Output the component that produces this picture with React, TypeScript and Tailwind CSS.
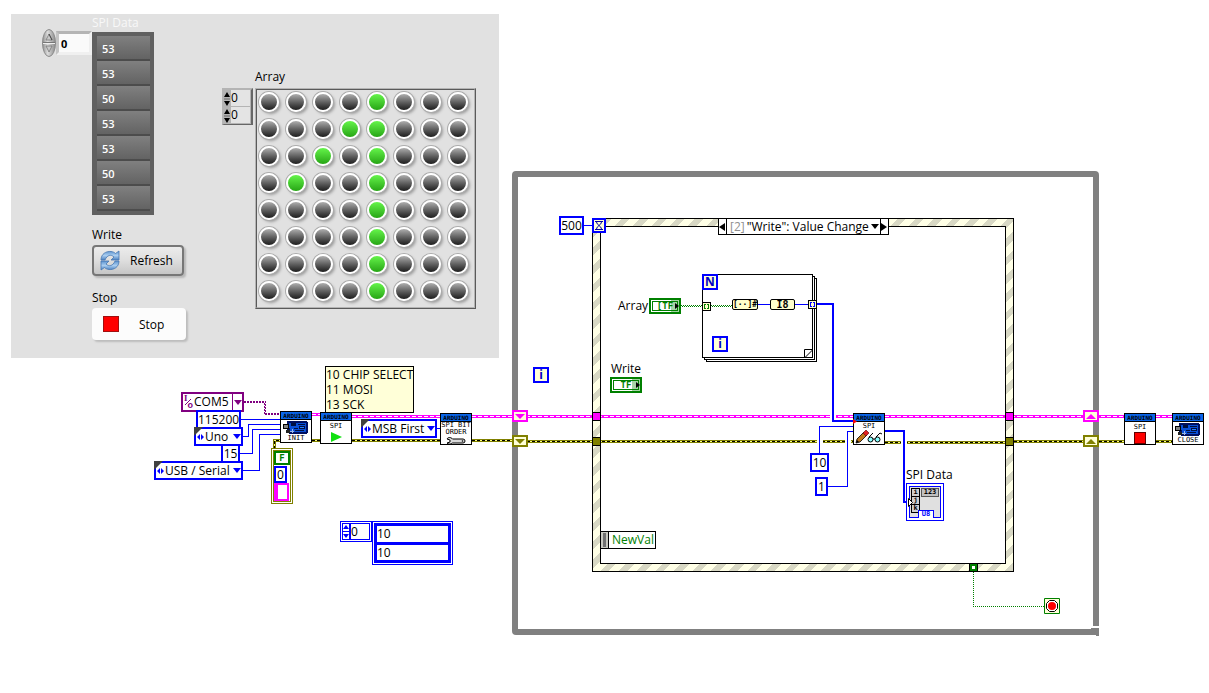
import type { ReactNode } from "react";

const spiData = [53, 53, 50, 53, 53, 50, 53];

const ledRows = [
  "00001000",
  "00011000",
  "00101000",
  "01001000",
  "00001000",
  "00001000",
  "00001000",
  "00001000",
];

/* ---------- Front panel ---------- */

const IndexKnob = () => (
  <svg width="14" height="28" viewBox="0 0 14 28" aria-hidden="true">
    <defs>
      <linearGradient id="knob" x1="0" x2="1" y1="0" y2="0">
        <stop offset="0" stopColor="#8f8f8f" />
        <stop offset="0.4" stopColor="#dcdcdc" />
        <stop offset="1" stopColor="#8a8a8a" />
      </linearGradient>
    </defs>
    <ellipse cx="7" cy="14" rx="6.5" ry="13.5" fill="url(#knob)" stroke="#8a8a8a" />
    <path d="M1 13.5h12" stroke="#777" />
    <path d="M1 14.5h12" stroke="#eee" />
    <path d="M7 5l3 6H4z" fill="#c8c8c8" stroke="#777" strokeWidth="0.8" />
    <path d="M7 5l3 6" stroke="#333" strokeWidth="0.8" />
    <path d="M7 23l3-6H4z" fill="#c8c8c8" stroke="#777" strokeWidth="0.8" />
  </svg>
);

const RefreshIcon = () => (
  <svg width="20" height="22" viewBox="0 0 20 22" aria-hidden="true">
    <defs>
      <linearGradient id="refresh" x1="0" x2="0" y1="0" y2="1">
        <stop offset="0" stopColor="#5d93cf" />
        <stop offset="0.5" stopColor="#a9cdf0" />
        <stop offset="1" stopColor="#4a7fbe" />
      </linearGradient>
    </defs>
    <path
      d="M1 10C1 4 6 1 11 1.500c2 .2 3.500 1 4.500 2L19 1v9h-8l3-3c-3-3-7-2-9 3z"
      fill="url(#refresh)"
      stroke="#4677b3"
      strokeWidth="0.8"
    />
    <path
      d="M19 11c0 6-5 9-10 8.500-2-.2-3.500-1-4.500-2L1 20v-9h8l-3 3c3 3 7 2 9-3z"
      fill="url(#refresh)"
      stroke="#4677b3"
      strokeWidth="0.8"
    />
  </svg>
);

const IndexRow = ({ label }: { label: string }) => (
  <div className="flex h-[17px] gap-px">
    <button aria-label={`Step ${label}`} className="w-[6px] bg-[#b4b4b4]">
      <svg width="6" height="16" viewBox="0 0 6 16" aria-hidden="true">
        <path d="M3 1l3 5H0zM3 15l3-5H0z" fill="#000" />
        <path d="M0 8h6" stroke="#666" />
      </svg>
    </button>
    <input
      aria-label={label}
      defaultValue="0"
      className="h-[16px] w-[19px] bg-[#e4e4e4] p-0 text-[12px] leading-[16px] outline-none"
    />
  </div>
);

const FrontPanel = () => (
  <section
    aria-label="Front panel"
    className="ml-[11px] flex w-[488px] items-start bg-[#e1e1e1] pb-[18px] pl-[31px]"
  >
    <div className="mt-[15px] flex items-center">
      <IndexKnob />
      <input
        aria-label="SPI Data index"
        defaultValue="0"
        className="h-6 w-[36px] border-[3px] border-t-[#b4b4b4] border-r-[#f0f0f0] border-b-[#f0f0f0] border-l-[#c4c4c4] bg-[#fafafa] pl-0.5 text-[11px] font-bold outline-none"
      />
    </div>

    <div className="flex w-[96px] flex-col items-start">
      <h2 className="leading-[18px] text-[#f8f8f8]">SPI Data</h2>
      <ol className="w-[62px] bg-[#606060] py-1 pr-1 pl-[5px]">
        {spiData.map((value, i) => (
          <li
            key={i}
            className="h-[25px] border-b-2 border-b-[#4c4c4c] bg-linear-to-b from-[#808080] to-[#636363] pl-[5px] text-[11px] leading-[26px] font-semibold text-white"
          >
            {value}
          </li>
        ))}
      </ol>
      <label htmlFor="write" className="mt-[11px] leading-[18px]">
        Write
      </label>
      <button
        id="write"
        className="mt-px flex h-[31px] w-[92px] items-center rounded-[4px] border-2 border-[#777] bg-linear-to-b from-[#ececec] via-[#dedede] to-[#c6c6c6] pl-[6px] shadow-[2px_2px_2px_#b8b8b8]"
      >
        <RefreshIcon />
        <span className="ml-[10px] pt-px">Refresh</span>
      </button>
      <label htmlFor="stop" className="mt-[13px] leading-[18px]">
        Stop
      </label>
      <button
        id="stop"
        className="mt-px flex h-8 w-[94px] items-center rounded-[4px] bg-[#fcfcfc] pl-[11px] shadow-[2px_2px_2px_#bcbcbc]"
      >
        <span className="size-4 border border-[#a01010] bg-[#ff0000]" />
        <span className="ml-[20px] pt-px">Stop</span>
      </button>
    </div>

    <div className="mt-[74px] ml-[34px] w-[31px] border-2 border-b border-t-[#b4b4b4] border-r-[#666] border-b-[#666] border-l-[#b4b4b4] bg-[#b4b4b4]">
      <IndexRow label="Row index" />
      <IndexRow label="Column index" />
    </div>

    <div className="mt-[54px] ml-0.5 flex flex-col items-start gap-0.5">
      <h2 className="leading-[18px]">Array</h2>
      <div className="border border-t-[#b4b4b4] border-r-[#5a5a5a] border-b-[#5a5a5a] border-l-[#b4b4b4]">
        <div className="grid grid-cols-8 gap-[7px] border border-t-[#5a5a5a] border-r-[#b4b4b4] border-b-[#b4b4b4] border-l-[#5a5a5a] pt-0.5 pr-[6px] pb-[6px] pl-0.5">
          {ledRows.flatMap((row, r) =>
            [...row].map((bit, c) => (
              <input
                key={`${r}-${c}`}
                type="checkbox"
                defaultChecked={bit === "1"}
                aria-label={`Row ${r} column ${c}`}
                className="size-5 appearance-none rounded-full border-2 border-white bg-linear-to-b from-[#c4c4c4] to-[#101010] bg-origin-border shadow-[0_0_0_1px_#acacac,2px_2px_3px_#999] checked:from-[#6cff50] checked:to-[#1c9c08]"
              />
            )),
          )}
        </div>
      </div>
    </div>
  </section>
);

/* ---------- Block diagram ---------- */

const PinkWire = ({ d }: { d: string }) => (
  <>
    <path d={d} stroke="#ff00ff" strokeWidth="3" />
    <path d={d} stroke="#fff" strokeDasharray="4 2" />
  </>
);

const ErrorWire = ({ d }: { d: string }) => (
  <>
    <path d={d} stroke="#808000" strokeWidth="3" />
    <path d={d} stroke="#ffff80" />
    <path d={d} stroke="#000" strokeDasharray="3 2" />
  </>
);

const Wires = () => (
  <svg className="absolute inset-0 h-full w-full" fill="none" shapeRendering="crispEdges" aria-hidden="true">
    <PinkWire d="M312 414.500H320" />
    <PinkWire d="M352 416.500H440M472 416.500H853M885 416.500H1124M1156 416.500H1172" />
    <ErrorWire d="M274.500 449V440.500H280M312 440.500H320M352 440.500H440M472 440.500H512" />
    <ErrorWire d="M512 441.500H853M885 442.500H1005M1014 441.500H1124M1156 441.500H1172" />

    <path
      d="M244 401.500H265.500V413.500H280M244 402.500H264.500V414.500H280"
      stroke="#800080"
      strokeDasharray="2 1"
    />
    <path
      d="M240 419.500H280M243 436.500H248.500V424.500H280M240 453.500H252.500V429.500H280M243 470.500H259.500V434.500H280M437 428.500H440M584 225.500H592"
      stroke="#0000ff"
    />
    <path d="M758 304.500H770M795 304.500H808" stroke="#0000ff" />
    <path d="M681 305.500H702M711 305.500H732" stroke="#008000" strokeDasharray="1 1" />
    <path d="M682 306.500H702M712 306.500H732" stroke="#008000" strokeDasharray="1 1" />

    <path d="M833 410V420M819.500 436V448M847.500 436V448M904 436V448" stroke="#fff" strokeWidth="6" />
    <path d="M817 304H833V421H853M885 431H904V502H907" stroke="#0000ff" strokeWidth="2" />
    <path d="M819.500 453V426.500H853M828 486.500H847.500V431.500H853" stroke="#0000ff" />
    <path d="M973.500 572V606.500H1044" stroke="#008000" strokeDasharray="1 1" />
  </svg>
);

const Caret = ({ className = "" }: { className?: string }) => (
  <svg width="8" height="5" viewBox="0 0 8 5" className={className} aria-hidden="true">
    <path d="M0 0h8L4 5z" fill="currentColor" />
  </svg>
);

const NumberConst = ({ label, value, className }: { label: string; value: string; className: string }) => (
  <input
    aria-label={label}
    defaultValue={value}
    className={`absolute h-[19px] border-2 border-[#0000ff] bg-white p-0 text-center text-[12px] leading-[15px] outline-none ${className}`}
  />
);

const EnumConst = ({ label, value, className }: { label: string; value: string; className: string }) => (
  <div className={`absolute flex h-[19px] items-center border-2 border-[#0000ff] bg-white pl-px ${className}`}>
    <svg width="9" height="9" viewBox="0 0 9 9" className="absolute -top-0.5 -left-0.5" aria-hidden="true">
      <path d="M0 0h9L0 9z" fill="#404040" />
    </svg>
    <svg width="7" height="6" viewBox="0 0 7 6" className="relative shrink-0" aria-hidden="true">
      <path d="M3 0v6L0 3zM4 0v6l3-3z" fill="#0000ff" />
    </svg>
    <select
      aria-label={label}
      defaultValue={value}
      className="relative ml-px h-[15px] min-w-0 flex-1 appearance-none bg-transparent text-[12px] leading-[15px] outline-none"
    >
      <option>{value}</option>
    </select>
    <Caret className="shrink-0 text-[#0000ff]" />
  </div>
);

const ArduinoNode = ({ className, children }: { className: string; children: ReactNode }) => (
  <div
    className={`absolute flex size-8 flex-col items-center overflow-hidden border border-black bg-white font-['DejaVu_Sans_Mono',monospace] text-[7px] leading-[7px] ${className}`}
  >
    <div className="h-2 w-full border-b border-black bg-[#0a66ea] text-center text-[6px] leading-[7px] font-bold text-black">
      ARDUINO
    </div>
    {children}
  </div>
);

const BoardIcon = () => (
  <svg width="26" height="13" viewBox="0 0 26 13" className="mt-px shrink-0" shapeRendering="crispEdges" aria-hidden="true">
    <path d="M4 0h20l1 2v9l-2 2H7l-3-2z" fill="#001060" />
    <path d="M6 2h17v9H7z" fill="#0a50d8" />
    <path d="M8 2h5v3H8zM16 5h6v3h-6z" fill="#001040" />
    <path d="M15 3.500h7M11 7.500h4M12 9.500h9" stroke="#001040" />
    <path d="M17 6.500h4" stroke="#2a80ff" />
    <path d="M0 3h5v4H0z" fill="#808080" stroke="#000" />
    <path d="M3 9h4v3H3z" fill="#222" />
    <path d="M9 8v4M7 10h4" stroke="#9ab8e8" />
  </svg>
);

const WrenchIcon = () => (
  <svg width="20" height="9" viewBox="0 0 20 9" className="shrink-0" aria-hidden="true">
    <path
      d="M6.500 3H17a2 2 0 0 1 0 4H6.500C5 8.500 2 8.500 1 7l3-1V4L1 3c1-2 4-2 5.500 0z"
      fill="#d8d8d8"
      stroke="#000"
    />
    <circle cx="16.500" cy="5" r="0.800" fill="#000" />
  </svg>
);

const ReadWriteIcon = () => (
  <svg width="28" height="14" viewBox="0 0 28 14" className="shrink-0" aria-hidden="true">
    <path d="M1 13l1-4 7-7 3 3-7 7z" fill="#c07818" stroke="#000" strokeWidth="0.8" />
    <path d="M8 3l3-3 3 3-3 3z" fill="#e02020" stroke="#500" strokeWidth="0.6" />
    <path d="M1 13l1-3 2 2z" fill="#000" />
    <circle cx="15.500" cy="9.500" r="2.500" fill="#8ff" stroke="#000" />
    <circle cx="22.500" cy="9.500" r="2.500" fill="#8ff" stroke="#000" />
    <path d="M14 7l4-4M21 7l4-4 2 1M18 9h2" stroke="#000" fill="none" />
  </svg>
);

const BoolTerminal = ({ text, label, className }: { text: string; label: string; className: string }) => (
  <div
    aria-label={label}
    className={`absolute flex h-4 w-8 items-center border-2 border-[#008000] bg-white p-px ${className}`}
  >
    <span className="flex h-full w-full items-center justify-center border border-[#008000] font-['DejaVu_Sans_Mono',monospace] text-[9px] leading-[9px] font-bold text-[#008000]">
      {text}
    </span>
    <span className="absolute inset-y-0 right-0 w-2 bg-[#008000]/35" />
    <svg width="4" height="6" viewBox="0 0 4 6" className="absolute right-0" aria-hidden="true">
      <path d="M0 0l4 3-4 3z" fill="#000" />
    </svg>
  </div>
);

const LoopTerminal = ({ text, className }: { text: string; className: string }) => (
  <div
    className={`absolute flex size-4 items-center justify-center border-2 border-[#0000ff] bg-[#ffffd8] text-[12px] leading-[12px] font-bold text-[#0000c0] ${className}`}
  >
    {text}
  </div>
);

const ShiftRegister = ({ down = false, className }: { down?: boolean; className: string }) => (
  <div className={`absolute flex h-3 w-4 items-center justify-center border-2 border-current bg-[#ffffd8] ${className}`}>
    <svg width="10" height="5" viewBox="0 0 10 5" aria-hidden="true">
      <path d={down ? "M0 0h10L5 5z" : "M0 5h10L5 0z"} fill="currentColor" />
    </svg>
  </div>
);

const Tunnel = ({ className }: { className: string }) => (
  <div className={`absolute size-[9px] border border-black ${className}`} />
);

const WhileLoop = () => (
  <>
    <div className="absolute top-[171px] left-[512px] h-[464px] w-[587px] rounded-[4px] border-[6px] border-[#808080]" />
    <svg width="8" height="12" viewBox="0 0 8 12" className="absolute top-[624px] left-[1091px]" shapeRendering="crispEdges" aria-hidden="true">
      <path d="M0 0h8v12H0z" fill="#fff" />
      <path d="M2 0h6v2H2zM0 4h8v7H0zM5 11h3v1H5z" fill="#808080" />
    </svg>
    <LoopTerminal text="i" className="top-[367px] left-[533px]" />
  </>
);

const EventStructure = () => (
  <>
    <div className="absolute top-[218px] left-[592px] h-[354px] w-[422px] border border-black bg-[repeating-linear-gradient(135deg,#ffffe6_0_7px,#d8d8c4_7px_13px)] p-[7px]">
      <div className="h-full border border-black bg-white" />
    </div>

    <div className="absolute top-[218px] left-[718px] flex h-[17px] w-[171px] border border-black bg-white">
      <button aria-label="Previous case" className="flex w-2 items-center border-r border-black">
        <svg width="6" height="8" viewBox="0 0 6 8" aria-hidden="true">
          <path d="M6 0v8L0 4z" />
        </svg>
      </button>
      <div className="relative flex flex-1 items-center pr-px pl-[3px]">
        <span className="text-[#909090]">[2]</span>
        <select
          aria-label="Event case"
          defaultValue="write"
          className="ml-0.5 h-[15px] min-w-0 flex-1 appearance-none bg-transparent text-[12px] leading-[15px] outline-none"
        >
          <option value="write">"Write": Value Change</option>
        </select>
        <Caret className="shrink-0" />
      </div>
      <button aria-label="Next case" className="flex w-2 items-center border-l border-black">
        <svg width="6" height="8" viewBox="0 0 6 8" aria-hidden="true">
          <path d="M0 0v8l6-4z" />
        </svg>
      </button>
    </div>

    <svg width="14" height="15" viewBox="0 0 14 15" className="absolute top-[218px] left-[592px]" aria-hidden="true">
      <path d="M1 1h12v13H1z" fill="#ffffd8" stroke="#0000ff" strokeWidth="2" />
      <path d="M3 3.500h8M3 11.500h8M4.500 4c0 3 5 4 5 7M9.500 4c0 3-5 4-5 7" stroke="#0000a0" fill="none" />
    </svg>

    <div className="absolute top-[531px] left-[600px] flex h-[18px] w-[56px] border border-black bg-white">
      <span className="w-2 border-r border-black bg-[#c8c8c0] px-0.5 py-px">
        <span className="block h-full bg-[#707070]" />
      </span>
      <span className="pl-[3px] leading-[16px] text-[#008000]">NewVal</span>
    </div>
  </>
);

const ForLoop = () => (
  <>
    <div className="absolute top-[278px] left-[706px] h-[84px] w-[111px] border border-black bg-white" />
    <div className="absolute top-[276px] left-[704px] h-[84px] w-[111px] border border-black bg-white" />
    <div className="absolute top-[274px] left-[702px] h-[84px] w-[111px] border border-black bg-white" />
    <svg width="9" height="9" viewBox="0 0 9 9" className="absolute top-[349px] left-[804px]" aria-hidden="true">
      <path d="M.5 9V.5H9L.5 9" fill="none" stroke="#000" />
    </svg>
    <LoopTerminal text="N" className="top-[274px] left-[702px]" />
    <LoopTerminal text="i" className="top-[336px] left-[712px]" />
  </>
);

const ConvertNode = ({ text, className }: { text: string; className: string }) => (
  <div
    className={`absolute flex h-[11px] items-center justify-center rounded-[2px] border border-black bg-[#ffffcc] font-['DejaVu_Sans_Mono',monospace] leading-[9px] font-bold ${className}`}
  >
    {text}
  </div>
);

const BracketTunnel = ({ className }: { className: string }) => (
  <svg width="9" height="9" viewBox="0 0 9 9" className={`absolute ${className}`} shapeRendering="crispEdges" aria-hidden="true">
    <path d="M.5.500h8v8h-8z" fill="#ffffcc" stroke="#000" />
    <path d="M4 2.500H2.500v4H4M5 2.500h1.500v4H5" fill="none" stroke="currentColor" />
  </svg>
);

const SpiIndicator = () => (
  <div className="absolute top-[483px] left-[906px] h-[38px] w-[38px] border border-[#0000ff] bg-white p-0.5 font-['DejaVu_Sans_Mono',monospace] text-[7px] leading-[7px] font-bold">
    <div className="relative h-full border border-[#0000ff] bg-[#e0e0e0] p-px">
      <div className="flex items-start gap-px">
        <div className="flex w-[9px] flex-col border border-black bg-[#d0d0d0] text-center">
          <span>i</span>
          <span className="border-y border-black">j</span>
          <span>k</span>
        </div>
        <span className="flex-1 border border-[#555] bg-[#c0c0c0] text-center">123</span>
      </div>
      <span className="absolute -bottom-px left-2 w-4 border-x border-t border-[#0000ff] bg-white text-center text-[#0000ff]">
        U8
      </span>
    </div>
    <svg width="5" height="9" viewBox="0 0 5 9" className="absolute top-[14px] left-px" aria-hidden="true">
      <path d="M.5.500L4.500 4.500.5 8.500z" fill="#fff" stroke="#000" />
    </svg>
  </div>
);

const BlockDiagram = () => (
  <section aria-label="Block diagram" className="pointer-events-none absolute inset-0 *:pointer-events-auto">
    <WhileLoop />
    <EventStructure />
    <ForLoop />
    <Wires />

    {/* Connection settings */}
    <div className="absolute top-[392px] left-[181px] flex h-5 w-[63px] items-center border-2 border-[#800080] bg-white">
      <span className="relative ml-px h-4 w-[9px] text-[9px] text-[#800080]">
        <span className="absolute top-0 left-0 font-['Liberation_Serif',serif] leading-[8px] font-bold">I</span>
        <svg width="9" height="16" viewBox="0 0 9 16" aria-hidden="true">
          <path d="M1 11l6-6" stroke="#800080" />
        </svg>
        <span className="absolute right-0 bottom-0 font-['Liberation_Sans',sans-serif] leading-[9px] font-bold">o</span>
      </span>
      <select
        aria-label="Serial port"
        className="ml-px h-4 min-w-0 flex-1 appearance-none text-[12px] leading-[16px] outline-none"
      >
        <option>COM5</option>
      </select>
      <span className="flex h-full w-[10px] items-center justify-center border-l border-[#800080]">
        <Caret className="text-[#800080]" />
      </span>
    </div>
    <NumberConst label="Baud rate" value="115200" className="top-[410px] left-[196px] w-[45px]" />
    <NumberConst label="Timeout" value="15" className="top-[444px] left-[221px] w-[19px]" />
    <EnumConst label="Board type" value="Uno" className="top-[427px] left-[194px] w-[49px]" />
    <EnumConst label="Connection type" value="USB / Serial" className="top-[461px] left-[154px] w-[89px]" />
    <EnumConst label="Bit order" value="MSB First" className="top-[419px] left-[361px] w-[76px]" />

    {/* Error cluster */}
    <div className="absolute top-[448px] left-[271px] h-[56px] w-[22px] border border-[#808000] bg-white p-px">
      <div className="h-full border border-[#808000]">
        <div className="flex h-[14px] w-4 items-center justify-center border-2 border-[#008000] font-['DejaVu_Sans_Mono',monospace] text-[9px] leading-[9px] font-bold text-[#008000]">
          F
        </div>
        <div className="mt-px h-[17px] w-[13px] border-2 border-[#0000ff] text-center leading-[13px]">0</div>
        <div className="h-[18px] w-[15px] border-2 border-l-4 border-[#ff00ff]" />
      </div>
    </div>

    <p className="absolute top-[366px] left-[325px] w-[89px] border border-black bg-[#ffffd8] leading-[15px] whitespace-pre">
      {"10 CHIP SELECT\n11 MOSI\n13 SCK"}
    </p>

    {/* Array constant */}
    <div className="absolute top-[521px] left-[340px] flex items-start">
      <div className="flex h-[21px] w-[32px] items-center border border-[#0000ff] bg-white p-px">
        <button aria-label="Step element index" className="flex h-full w-2 items-center justify-center bg-[#0000ff]">
          <svg width="6" height="15" viewBox="0 0 6 15" aria-hidden="true">
            <path d="M0 0h6v7H0zM0 8h6v7H0z" fill="#fff" />
            <path d="M3 1l3 4H0zM3 14l3-4H0z" fill="#0000ff" />
          </svg>
        </button>
        <input
          aria-label="Element index"
          defaultValue="0"
          className="h-full min-w-0 flex-1 border border-[#0000ff] p-0 text-[12px] outline-none"
        />
      </div>
      <div className="h-[44px] w-[81px] border border-[#0000ff] bg-white p-px">
        <div className="flex h-full flex-col gap-[3px] border-[3px] border-[#0000ff] bg-[#0000ff]">
          <input aria-label="Element 0" defaultValue="10" className="min-h-0 w-full flex-1 bg-white p-0 text-[12px] leading-[15px] outline-none" />
          <input aria-label="Element 1" defaultValue="10" className="min-h-0 w-full flex-1 bg-white p-0 text-[12px] leading-[15px] outline-none" />
        </div>
      </div>
    </div>

    {/* Arduino VIs */}
    <ArduinoNode className="top-[411px] left-[280px]">
      <BoardIcon />
      <span className="mt-px">INIT</span>
    </ArduinoNode>
    <ArduinoNode className="top-[412px] left-[320px]">
      <span className="mt-0.5">SPI</span>
      <svg width="11" height="10" viewBox="0 0 11 10" className="mt-0.5" aria-hidden="true">
        <path d="M0 0l11 5L0 10z" fill="#10e010" />
      </svg>
    </ArduinoNode>
    <ArduinoNode className="top-[413px] left-[440px]">
      <span>SPI BIT</span>
      <span>ORDER</span>
      <WrenchIcon />
    </ArduinoNode>
    <ArduinoNode className="top-[413px] left-[853px]">
      <span className="mt-px">SPI</span>
      <ReadWriteIcon />
    </ArduinoNode>
    <ArduinoNode className="top-[413px] left-[1124px]">
      <span className="mt-0.5">SPI</span>
      <span className="mt-px size-3 border border-[#600000] bg-[#ff0000]" />
    </ArduinoNode>
    <ArduinoNode className="top-[413px] left-[1172px]">
      <BoardIcon />
      <span className="mt-px">CLOSE</span>
    </ArduinoNode>

    {/* Loop edges */}
    <ShiftRegister down className="top-[410px] left-[512px] text-[#ff00ff]" />
    <ShiftRegister down className="top-[435px] left-[512px] text-[#808000]" />
    <ShiftRegister className="top-[410px] left-[1083px] text-[#ff00ff]" />
    <ShiftRegister className="top-[435px] left-[1083px] text-[#808000]" />
    <Tunnel className="top-[412px] left-[592px] bg-[#ff00ff]" />
    <Tunnel className="top-[437px] left-[592px] bg-[#808000]" />
    <Tunnel className="top-[412px] left-[1005px] bg-[#ff00ff]" />
    <Tunnel className="top-[437px] left-[1005px] bg-[#808000]" />
    <div className="absolute top-[563px] left-[969px] flex size-[9px] items-center justify-center border border-black bg-[#008000]">
      <span className="size-[3px] bg-white" />
    </div>

    {/* Event case contents */}
    <NumberConst label="Event timeout" value="500" className="top-[216px] left-[559px] w-[25px]" />
    <span className="absolute top-[297px] left-[618px] leading-[18px]">Array</span>
    <BoolTerminal text="[TF" label="Array" className="top-[298px] left-[649px]" />
    <span className="absolute top-[360px] left-[611px] leading-[18px]">Write</span>
    <BoolTerminal text="TF" label="Write" className="top-[377px] left-[610px]" />
    <BracketTunnel className="top-[302px] left-[702px] text-[#008000]" />
    <ConvertNode text="[··]#" className="top-[299px] left-[732px] w-[26px] text-[8px]" />
    <ConvertNode text="I8" className="top-[299px] left-[770px] w-[25px] text-[10px]" />
    <BracketTunnel className="top-[300px] left-[808px] text-[#0000ff]" />
    <NumberConst label="SPI channel" value="10" className="top-[453px] left-[810px] w-[19px]" />
    <NumberConst label="Bytes" value="1" className="top-[477px] left-[815px] w-[13px]" />
    <span className="absolute top-[466px] left-[906px] leading-[18px] whitespace-nowrap">SPI Data</span>
    <SpiIndicator />
    <svg width="4" height="5" viewBox="0 0 4 5" className="absolute top-[419px] left-[853px]" aria-hidden="true">
      <path d="M0 0l4 2.500L0 5z" fill="#ff0000" />
    </svg>

    <svg width="16" height="16" viewBox="0 0 16 16" className="absolute top-[598px] left-[1044px]" aria-hidden="true">
      <path d="M.5.500h15v15H.5z" fill="#ffffd8" stroke="#008000" />
      <path d="M5.500 2.500h5l3 3v5l-3 3h-5l-3-3v-5z" fill="#fff" stroke="#000" />
      <circle cx="8" cy="8" r="4" fill="#ff0000" />
    </svg>
  </section>
);

const App = () => {
  return (
    <main className="relative min-h-screen bg-white pt-[14px] font-['Open_Sans','Noto_Sans',sans-serif] text-[12px] text-black">
      <FrontPanel />
      <BlockDiagram />
    </main>
  );
};

export default App;
